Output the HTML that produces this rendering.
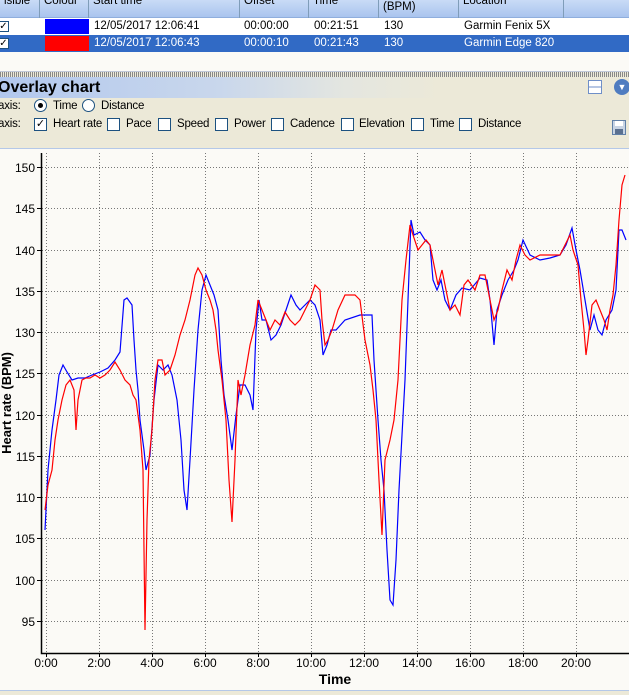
<!DOCTYPE html>
<html><head><style>
*{margin:0;padding:0;box-sizing:border-box}
body{width:629px;height:695px;overflow:hidden;background:#FBFAF6;font-family:"Liberation Sans",sans-serif;font-size:12px;position:relative;color:#000}
.a{position:absolute}
.hdr{top:0;left:0;width:629px;height:18px;background:linear-gradient(#C9DBF6,#A9C4EE);border-bottom:1px solid #8FAEDD}
.hdr div{position:absolute;top:-6px;height:24px;border-right:1px solid #7F9DB9;padding-left:4px;font-size:11.5px;line-height:14px}
.row{left:0;width:629px;height:17px;line-height:17px;font-size:11.5px}
.row span{position:absolute;top:0}
.cb{position:absolute;width:11px;height:11px;border:1px solid #1C5180;background:#fff;font-size:10px;line-height:9px;text-align:center}
.sq{position:absolute;width:13px;height:13px;border:1px solid #1C5180;background:#fff;top:118px}
.opt{background:#ECE9D8;top:98px;left:0;width:629px;height:51px;border-bottom:1px solid #B4C8E8}
.t{position:absolute;font-size:11.5px;letter-spacing:-0.2px}
</style></head><body>
<div class="a hdr">
<div style="left:0;width:40px">isible</div>
<div style="left:40px;width:49px">Colour</div>
<div style="left:89px;width:151px">Start time</div>
<div style="left:240px;width:69px">Offset</div>
<div style="left:309px;width:70px">Time</div>
<div style="left:379px;width:80px;top:0px;line-height:15px">(BPM)</div>
<div style="left:459px;width:105px">Location</div>
</div>
<div class="a row" style="top:18px;background:#fff">
<div class="cb" style="left:-2px;top:3px">✓</div>
<div class="a" style="left:45px;top:1px;width:44px;height:15px;background:#0000FF"></div>
<span style="left:94px">12/05/2017 12:06:41</span><span style="left:244px">00:00:00</span><span style="left:314px">00:21:51</span><span style="left:384px">130</span><span style="left:464px">Garmin Fenix 5X</span>
</div>
<div class="a row" style="top:35px;background:#316AC5;color:#fff">
<div class="cb" style="left:-2px;top:3px;color:#000">✓</div>
<div class="a" style="left:45px;top:1px;width:44px;height:15px;background:#FF0000"></div>
<span style="left:94px">12/05/2017 12:06:43</span><span style="left:244px">00:00:10</span><span style="left:314px">00:21:43</span><span style="left:384px">130</span><span style="left:464px">Garmin Edge 820</span>
</div>
<div class="a" style="top:52px;left:0;width:629px;height:20px;background:#FBFAF6;border-bottom:1px solid #C0C8D8"></div>
<div class="a" style="top:72px;left:0;width:629px;height:5px;background:repeating-linear-gradient(90deg,#888 0 1px,#ECE9D8 1px 2px)"></div>
<div class="a" style="top:77px;left:0;width:629px;height:22px;background:linear-gradient(90deg,#B2C8EE 0%,#C9D7EC 35%,#E4E6E0 55%,#ECE9D8 70%);border-bottom:1px solid #B4C8E8"></div>
<div class="a" style="top:78px;left:-2px;font-size:16px;font-weight:bold;line-height:20px">Overlay chart</div>
<div class="a" style="top:80px;left:588px;width:14px;height:14px;border:1px solid #6F8FC8;background:linear-gradient(#fff 45%,#6F8FC8 45% 55%,#fff 55%)"></div>
<div class="a" style="top:79px;left:614px;width:16px;height:16px;border-radius:50%;background:#4F7CC0;color:#fff;font-size:9px;text-align:center;line-height:16px">▼</div>
<div class="a opt"></div>
<div class="t" style="top:100px;left:-2px">axis:</div>
<div class="a" style="top:99px;left:34px;width:13px;height:13px;border:1px solid #1C5180;border-radius:50%;background:#fff"><div style="margin:3px;width:5px;height:5px;border-radius:50%;background:#000"></div></div>
<div class="t" style="top:100px;left:53px">Time</div>
<div class="a" style="top:99px;left:82px;width:13px;height:13px;border:1px solid #1C5180;border-radius:50%;background:#fff"></div>
<div class="t" style="top:100px;left:101px">Distance</div>
<div class="t" style="top:118px;left:-2px">axis:</div>
<div class="sq" style="left:34px;font-size:11px;line-height:11px;text-align:center">✓</div><div class="t" style="top:118px;left:53px">Heart rate</div>
<div class="sq" style="left:107px"></div><div class="t" style="top:118px;left:126px">Pace</div>
<div class="sq" style="left:158px"></div><div class="t" style="top:118px;left:177px">Speed</div>
<div class="sq" style="left:215px"></div><div class="t" style="top:118px;left:234px">Power</div>
<div class="sq" style="left:271px"></div><div class="t" style="top:118px;left:290px">Cadence</div>
<div class="sq" style="left:341px"></div><div class="t" style="top:118px;left:359px">Elevation</div>
<div class="sq" style="left:411px"></div><div class="t" style="top:118px;left:430px">Time</div>
<div class="sq" style="left:459px"></div><div class="t" style="top:118px;left:478px">Distance</div>
<svg class="a" style="top:120px;left:612px" width="14" height="15"><rect x="0.5" y="0.5" width="13" height="14" fill="#C8D4E4" stroke="#6080A8"/><rect x="3" y="1" width="8" height="5" fill="#fff"/><rect x="3" y="9" width="8" height="5" fill="#5A7090"/></svg>
<svg class="a" style="top:0;left:0" width="629" height="695">
<g stroke="#777" stroke-dasharray="1,2" stroke-width="1">
<path d="M42 167.5H629M42 208.5H629M42 250.5H629M42 291.5H629M42 332.5H629M42 373.5H629M42 415.5H629M42 456.5H629M42 497.5H629M42 538.5H629M42 580.5H629M42 621.5H629"/>
<path d="M46.5 153V653M99.5 153V653M152.5 153V653M205.5 153V653M258.5 153V653M311.5 153V653M364.5 153V653M417.5 153V653M470.5 153V653M523.5 153V653M576.5 153V653"/>
</g>
<path d="M41.5 153V653.5H629" stroke="#000" stroke-width="1.5" fill="none"/>
<g stroke="#000"><path d="M37 167.5h4M37 208.5h4M37 250.5h4M37 291.5h4M37 332.5h4M37 373.5h4M37 415.5h4M37 456.5h4M37 497.5h4M37 538.5h4M37 580.5h4M37 621.5h4"/>
<path d="M46.5 653v4M99.5 653v4M152.5 653v4M205.5 653v4M258.5 653v4M311.5 653v4M364.5 653v4M417.5 653v4M470.5 653v4M523.5 653v4M576.5 653v4"/></g>
<g font-family="Liberation Sans" font-size="12" text-anchor="end">
<text x="35" y="172">150</text><text x="35" y="213">145</text><text x="35" y="255">140</text><text x="35" y="296">135</text><text x="35" y="337">130</text><text x="35" y="378">125</text><text x="35" y="420">120</text><text x="35" y="461">115</text><text x="35" y="502">110</text><text x="35" y="543">105</text><text x="35" y="585">100</text><text x="35" y="626">95</text>
</g>
<g font-family="Liberation Sans" font-size="12" text-anchor="middle">
<text x="46" y="667">0:00</text><text x="99" y="667">2:00</text><text x="152" y="667">4:00</text><text x="205" y="667">6:00</text><text x="258" y="667">8:00</text><text x="311" y="667">10:00</text><text x="364" y="667">12:00</text><text x="417" y="667">14:00</text><text x="470" y="667">16:00</text><text x="523" y="667">18:00</text><text x="576" y="667">20:00</text>
</g>
<text x="335" y="684" font-family="Liberation Sans" font-size="14" font-weight="bold" text-anchor="middle">Time</text>
<text transform="translate(11,403) rotate(-90)" font-family="Liberation Sans" font-size="13" font-weight="bold" text-anchor="middle">Heart rate (BPM)</text>
<polyline fill="none" stroke="#0000FF" stroke-width="1.2" points="45,530 48,470 52,430 56,400 59,375 63,365 67,372 72,380 78,378 85,378 92,375 100,372 108,368 115,360 120,352 124,300 127,298 132,305 134,340 136,370 138,390 140,420 144,450 146,470 150,455 154,400 158,365 163,370 168,365 172,375 177,400 181,440 184,490 187,510 190,460 194,390 198,330 202,290 206,275 210,285 214,295 218,310 221,360 224,395 228,420 232,450 236,415 240,385 245,385 250,395 253,410 256,330 259,300 262,320 266,320 271,340 276,335 281,325 286,310 291,295 296,305 300,310 305,305 310,300 315,305 320,320 323,355 327,345 331,330 336,330 345,320 360,315 372,315 374,360 378,420 381,460 384,490 387,550 390,600 393,605 396,560 399,490 402,435 405,380 408,300 411,220 414,235 420,232 425,240 430,245 433,280 437,290 441,280 445,300 450,310 456,295 462,288 470,290 480,278 487,280 490,300 494,345 497,310 502,295 508,280 514,270 518,260 523,240 530,255 540,260 550,258 560,255 566,245 572,228 576,250 580,270 585,300 590,330 594,315 598,330 602,335 606,320 612,310 616,290 619,230 622,230 626,240"/>
<polyline fill="none" stroke="#FF0000" stroke-width="1.2" points="45,510 48,485 52,470 55,440 58,420 62,400 66,385 70,380 74,390 76,430 78,400 82,380 86,378 90,378 95,375 100,378 105,375 110,370 115,362 120,370 125,380 130,385 133,395 136,400 140,430 143,470 145,630 147,520 149,460 152,430 155,380 158,360 162,360 165,375 170,370 175,355 180,335 185,320 190,300 195,275 198,268 202,275 206,290 210,300 213,310 216,330 218,350 222,380 226,420 229,480 232,522 235,460 238,380 241,395 245,375 250,345 255,325 258,300 262,310 266,320 270,330 275,320 280,325 285,312 290,320 295,325 300,320 305,310 310,300 315,285 320,290 322,320 325,345 328,340 332,330 338,310 345,295 350,295 355,295 360,300 365,340 370,365 373,390 376,420 379,480 382,535 385,460 390,440 394,420 398,380 402,300 406,260 410,225 413,235 418,250 422,245 426,240 430,245 435,270 438,285 442,270 446,290 450,310 455,305 460,315 464,285 468,280 475,290 480,275 485,275 490,300 494,320 498,310 502,290 507,270 512,280 516,260 520,245 525,255 530,260 540,255 550,255 560,255 565,245 570,235 573,250 578,265 581,300 584,330 586,355 588,340 592,305 596,300 600,310 604,320 607,330 610,310 613,295 616,265 619,220 622,185 625,175"/>
</svg>
<div class="a" style="top:690px;left:0;width:629px;height:5px;background:#ECE9D8;border-top:1px solid #B4C8E8"></div>
</body></html>
